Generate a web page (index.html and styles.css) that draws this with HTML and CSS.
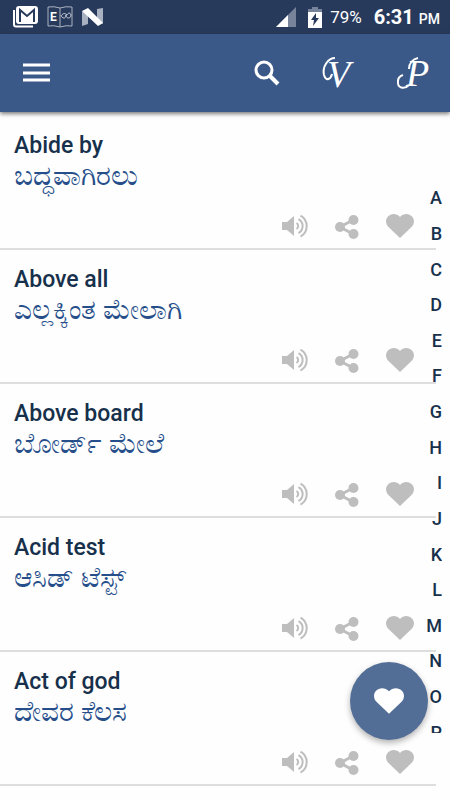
FILE: index.html
```html
<!DOCTYPE html>
<html lang="en">
<head>
    <meta charset="UTF-8">
    <meta name="viewport" content="width=device-width, initial-scale=1">
    <title>Idioms and Phrases</title>
    <link rel="stylesheet" href="styles.css">
</head>
<body>
<!-- Shared icons -->
<svg class="sprite" aria-hidden="true">
    <symbol id="icon-sound" viewBox="0 0 27 24">
        <path d="M0 8h5l7-6v20l-7-6H0z"/>
        <path d="M14.500 9a3.500 3.500 0 0 1 0 6M16.500 5a8 8 0 0 1 0 14M18.500 1.500a12 12 0 0 1 0 21" fill="none" stroke="currentColor" stroke-width="2"/>
    </symbol>
    <symbol id="icon-share" viewBox="0 0 25 26">
        <path d="M18 7L5 14l13 7" fill="none" stroke="currentColor" stroke-width="3"/>
        <circle cx="18.500" cy="7" r="5"/>
        <circle cx="5" cy="14" r="5"/>
        <circle cx="18.500" cy="21" r="5"/>
    </symbol>
    <symbol id="icon-heart" viewBox="0 0 28 25">
        <path d="M14 24L2.500 13C-.5 10-.8 5.500 1.800 2.700 5-.8 10.500-.8 14 3c3.500-3.800 9-3.800 12.200-.3 2.600 2.800 2.300 7.300-.7 10.300z"/>
    </symbol>
</svg>

<div class="status-bar">
    <div class="status-icons">
        <svg width="26" height="22" viewBox="0 0 26 22">
            <path d="M2 4v14.500a2 2 0 0 0 2 2h17" fill="none" stroke="#fff" stroke-width="2"/>
            <rect x="5" y="1" width="20" height="16" rx="2" fill="#283a5b" stroke="#fff" stroke-width="2"/>
            <path d="M6 2h18v14H6z" fill="#fff"/>
            <path d="M8 16V4l7 6 7-6v12" fill="none" stroke="#283a5b" stroke-width="2"/>
        </svg>
        <svg width="26" height="22" viewBox="0 0 26 22">
            <path d="M1 1q6-1 12 1 6-2 12-1v19q-6-1-12 1-6-2-12-1zM13 2v19" fill="none" stroke="#a9b2c1"/>
            <text x="3" y="15" class="book-letter">E</text>
            <path d="M14 9c1 4 5 4 5 0 0 4 5 4 5 0-1-3-3-2-4 0-2-2-4-2-5 0" fill="none" stroke="#cbd2dc"/>
        </svg>
        <svg width="22" height="18" viewBox="0 0 22 18">
            <path d="M0 3l6 4v9l-6 2zM15 1l6-1v16l-6-5z" fill="#a9b2c1"/>
            <path d="M0 3l6-3 15 15-5 3z" fill="#fff"/>
        </svg>
    </div>
    <div class="status-info">
        <svg width="20" height="20" viewBox="0 0 20 20">
            <path d="M0 20L20 0v20z" fill="#77839a"/>
            <path d="M0 20L12 8v12z" fill="#fff"/>
        </svg>
        <svg width="14" height="21" viewBox="0 0 14 21">
            <path d="M0 5V2h4V0h6v2h4v3z" fill="#77839a"/>
            <path d="M0 5h14v16H0z" fill="#fff"/>
            <path d="M8 6l-5 7h3l-1 6 6-8H8z" fill="#283a5b"/>
        </svg>
        <span class="battery">79%</span>
        <span class="clock">6:31<small>PM</small></span>
    </div>
</div>

<header>
    <button type="button" aria-label="Menu">
        <svg width="28" height="20" viewBox="0 0 28 20">
            <path d="M0 2h27M0 10h27M0 17h27" stroke="#fff" stroke-width="3"/>
        </svg>
    </button>
    <div class="header-actions">
        <button type="button" aria-label="Search">
            <svg width="26" height="26" viewBox="0 0 26 26">
                <circle cx="10" cy="10" r="8" fill="none" stroke="#fff" stroke-width="3"/>
                <path d="M15.500 15.500l8.500 8.500" stroke="#fff" stroke-width="4"/>
            </svg>
        </button>
        <button type="button" aria-label="Vocabulary">
            <svg width="36" height="48" viewBox="0 0 36 48">
                <path d="M15 9C8 9 2 18 4 26c2 7 7 4 8-1" class="swash"/>
                <text x="7" y="38" class="script-letter">V</text>
            </svg>
        </button>
        <button type="button" aria-label="Phrases">
            <svg width="36" height="48" viewBox="0 0 36 48">
                <path d="M13 36c-5 5-12 3-11-4 0-3 2-5 5-6M13 20c0-6 4-10 9-11" class="swash"/>
                <text x="10" y="37" class="script-letter">P</text>
            </svg>
        </button>
    </div>
</header>

<main>
    <ul class="phrase-list">
        <li>
            <h2>Abide by</h2>
            <p lang="kn">ಬದ್ಧವಾಗಿರಲು</p>
            <div class="actions">
                <button type="button" aria-label="Listen"><svg width="27" height="24"><use href="#icon-sound"/></svg></button>
                <button type="button" aria-label="Share"><svg width="25" height="26"><use href="#icon-share"/></svg></button>
                <button type="button" aria-label="Favourite"><svg width="28" height="25"><use href="#icon-heart"/></svg></button>
            </div>
        </li>
        <li>
            <h2>Above all</h2>
            <p lang="kn">ಎಲ್ಲಕ್ಕಿಂತ ಮೇಲಾಗಿ</p>
            <div class="actions">
                <button type="button" aria-label="Listen"><svg width="27" height="24"><use href="#icon-sound"/></svg></button>
                <button type="button" aria-label="Share"><svg width="25" height="26"><use href="#icon-share"/></svg></button>
                <button type="button" aria-label="Favourite"><svg width="28" height="25"><use href="#icon-heart"/></svg></button>
            </div>
        </li>
        <li>
            <h2>Above board</h2>
            <p lang="kn">ಬೋರ್ಡ್ ಮೇಲೆ</p>
            <div class="actions">
                <button type="button" aria-label="Listen"><svg width="27" height="24"><use href="#icon-sound"/></svg></button>
                <button type="button" aria-label="Share"><svg width="25" height="26"><use href="#icon-share"/></svg></button>
                <button type="button" aria-label="Favourite"><svg width="28" height="25"><use href="#icon-heart"/></svg></button>
            </div>
        </li>
        <li>
            <h2>Acid test</h2>
            <p lang="kn">ಆಸಿಡ್ ಟೆಸ್ಟ್</p>
            <div class="actions">
                <button type="button" aria-label="Listen"><svg width="27" height="24"><use href="#icon-sound"/></svg></button>
                <button type="button" aria-label="Share"><svg width="25" height="26"><use href="#icon-share"/></svg></button>
                <button type="button" aria-label="Favourite"><svg width="28" height="25"><use href="#icon-heart"/></svg></button>
            </div>
        </li>
        <li>
            <h2>Act of god</h2>
            <p lang="kn">ದೇವರ ಕೆಲಸ</p>
            <div class="actions">
                <button type="button" aria-label="Listen"><svg width="27" height="24"><use href="#icon-sound"/></svg></button>
                <button type="button" aria-label="Share"><svg width="25" height="26"><use href="#icon-share"/></svg></button>
                <button type="button" aria-label="Favourite"><svg width="28" height="25"><use href="#icon-heart"/></svg></button>
            </div>
        </li>
    </ul>
</main>

<!-- Alphabet index over the right edge of the list -->
<nav class="index" aria-label="Alphabet">
    <div class="letters">
        <a href="#a">A</a>
        <a href="#b">B</a>
        <a href="#c">C</a>
        <a href="#d">D</a>
        <a href="#e">E</a>
        <a href="#f">F</a>
        <a href="#g">G</a>
        <a href="#h">H</a>
        <a href="#i">I</a>
        <a href="#j">J</a>
        <a href="#k">K</a>
        <a href="#l">L</a>
        <a href="#m">M</a>
        <a href="#n">N</a>
        <a href="#o">O</a>
        <a href="#p">P</a>
    </div>
</nav>

<button type="button" class="fab" aria-label="Favourites">
    <svg width="30" height="27"><use href="#icon-heart"/></svg>
</button>
</body>
</html>
```

FILE: styles.css
```css
* {
    box-sizing: border-box;
}

body {
    font-family: Roboto, "Noto Sans", sans-serif;
    margin: 0;
    background: #fefefe;
    color: #17304b;
}

button {
    display: flex;
    padding: 0;
    border: 0;
    background: none;
    color: inherit;
    cursor: pointer;
}

svg {
    display: block;
    fill: currentColor;
}

.sprite {
    position: absolute;
    width: 0;
    height: 0;
}

.status-bar {
    display: flex;
    justify-content: space-between;
    align-items: center;
    height: 34px;
    padding: 0 10px 0 12px;
    background: #283a5b;
    color: #fff;
}

.status-icons {
    display: flex;
    align-items: center;
    gap: 9px;
}

.status-info {
    display: flex;
    align-items: center;
    gap: 12px;
}

.battery {
    margin-left: -4px;
    font-size: 17px;
}

.clock {
    font-size: 20px;
    font-weight: 700;
}

.clock small {
    margin-left: 5px;
    font-size: 14px;
    font-weight: 500;
}

.book-letter {
    font-size: 12px;
    font-weight: 700;
    fill: #fff;
}

header {
    position: relative;
    display: flex;
    justify-content: space-between;
    align-items: center;
    height: 78px;
    padding: 0 18px 0 23px;
    background: #3b5988;
    box-shadow: 0 2px 4px rgba(0, 0, 0, 0.5);
}

.header-actions {
    display: flex;
    align-items: center;
    gap: 40px;
}

.script-letter {
    font-family: "Liberation Serif", serif;
    font-size: 38px;
    font-style: italic;
    fill: #fff;
}

.swash {
    fill: none;
    stroke: #fff;
    stroke-width: 2;
}

.phrase-list {
    list-style: none;
    margin: 4px 14px 0 0;
    padding: 0;
}

.phrase-list li {
    padding: 16px 22px 0 14px;
    border-bottom: 2px solid #dedede;
}

.phrase-list h2 {
    margin: 0;
    font-size: 23px;
    line-height: 28px;
    font-weight: 500;
}

.phrase-list p {
    margin: 0;
    font-size: 28px;
    line-height: 32px;
    height: 32px;
    color: #264e8a;
}

.actions {
    display: flex;
    justify-content: flex-end;
    align-items: center;
    gap: 26px;
    height: 44px;
    margin-top: 12px;
    color: #bebebe;
}

.index {
    position: absolute;
    top: 180px;
    right: 8px;
    bottom: 67px;
    overflow: hidden;
}

.letters {
    display: flex;
    flex-direction: column;
    height: 570px;
    text-align: right;
}

.letters a {
    display: flex;
    flex: 1;
    justify-content: flex-end;
    align-items: center;
    color: #17304b;
    font-size: 18px;
    font-weight: 500;
    text-decoration: none;
}

.fab {
    position: fixed;
    right: 22px;
    bottom: 60px;
    justify-content: center;
    align-items: center;
    width: 78px;
    height: 78px;
    border-radius: 50%;
    background: #526e97;
    box-shadow: 0 3px 6px rgba(0, 0, 0, 0.3);
    color: #fff;
}
```
